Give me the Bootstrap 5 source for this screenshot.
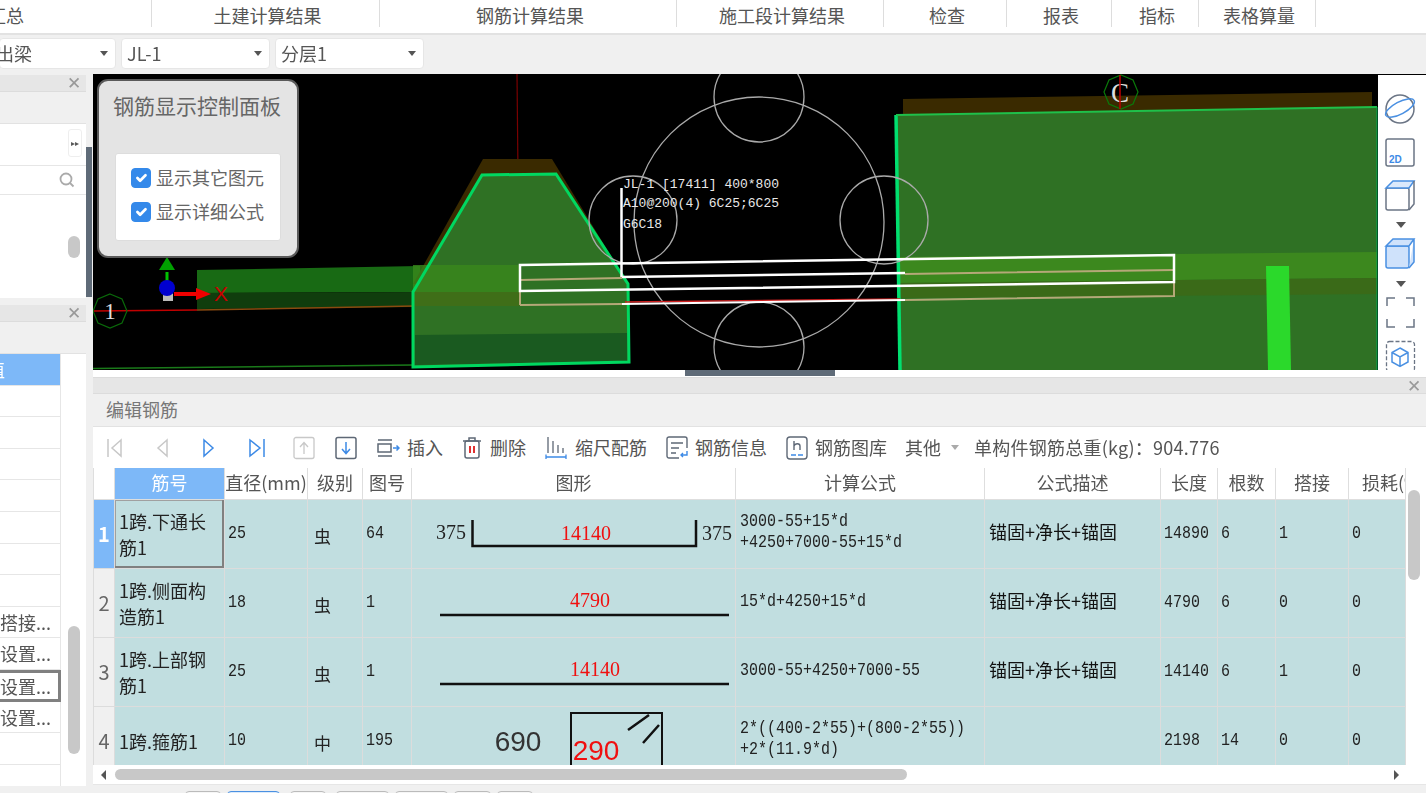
<!DOCTYPE html>
<html lang="zh-CN">
<head><meta charset="UTF-8"><meta name="viewport" content="width=device-width, initial-scale=1">
<title>编辑钢筋</title>
<link href="https://cdn.jsdelivr.net/npm/bootstrap@5.3.0/dist/css/bootstrap.min.css" rel="stylesheet">
<style>
html,body{height:793px;overflow:hidden}
body{background:#f0f0f0;color:#555;font-family:"Noto Sans CJK SC","Liberation Sans",sans-serif;font-size:18px;line-height:1.2;filter:blur(.35px)}
.top-tabs{height:35px;background:#fff;border-bottom:2px solid #e2e2e2;overflow:hidden}
.tab-cell{height:27px;border-right:1px solid #ddd;flex:none;line-height:31px;text-align:center;padding-left:4px}
.tab-first{width:152px;text-align:left;padding-left:0;text-indent:-12px}
.tool-strip{height:39px;padding:3px 0 0 0;overflow:hidden}
.pick{height:31px;background:#fff;border-radius:4px;border:1px solid #e6e6e6;padding:0 7px 0 5px;margin-right:5px;line-height:29px;flex:none}
.pick-a{width:117px;margin-left:-1px}
.pick-a .pick-text{margin-left:-9px}
.pick-b{width:149px}
.caret-down{width:0;height:0;border-left:4px solid transparent;border-right:4px solid transparent;border-top:5px solid #555;display:inline-block;align-self:center}
.main-area{height:719px}
.side-col{width:86px;flex:none}
.side-panel{background:#fff;position:relative;overflow:hidden}
.side-one{height:223px;margin-top:1px}
.side-two{height:481px;margin-top:7px}
.panel-head{height:17px;background:#e6e6e6;border-bottom:1px solid #dcdcdc;position:relative}
.panel-x{position:absolute;right:5px;top:-1px;font-size:17px;line-height:20px;color:#999;font-family:"Liberation Sans",sans-serif}
.panel-sub{height:32px;background:#f0f0f0;border-bottom:1px solid #e2e2e2}
.side-row{height:42px;border-bottom:1px solid #e6e6e6;position:relative}
.side-find{height:29px;border-bottom:1px solid #e6e6e6;position:relative}
.more-chip{position:absolute;left:68px;top:5px;width:14px;height:28px;background:#fff;border:1px solid #eee;border-radius:3px;font-size:8px;line-height:26px;text-align:center;color:#555}
.side-thumb{position:absolute;left:68px;width:12px;background:#c8c8c8;border-radius:6px}
.thumb-one{top:161px;height:22px}
.thumb-two{top:321px;height:128px}
.split-col{width:7px;flex:none}
.split-bar{width:6px;height:150px;margin-top:73px;background:#5f6b78}
.work-col{width:1333px;flex:none}
.view-box{height:296px;background:#000;position:relative}
.view-box svg{display:block}
.view-rail{position:absolute;right:0;top:1px;width:48px;height:295px;background:#fff}
.ctrl-panel{position:absolute;left:4px;top:5px;width:202px;height:179px;background:#e4e4e4;border:2px solid #5a5a5a;border-radius:11px;padding:0 16px}
.ctrl-title{font-size:21px;line-height:26px;color:#666;text-align:center;margin:11px -2px 35px -4px;white-space:nowrap}
.ctrl-box{height:88px;background:#fff;border:1px solid #ddd;border-radius:3px;padding:13px 0 0 15px}
.ctrl-box .form-check{min-height:0;padding:0;margin:0 0 12px;display:flex;align-items:center;gap:5px;height:22px}
.ctrl-box .form-check-input{float:none;margin:0;width:20px;height:20px;background-color:#3489ea;border-color:#3489ea;border-radius:4px}
.ctrl-box .form-check-label{opacity:1;color:#666;white-space:nowrap}
.drag-strip{height:7px;background:#fff}
.drag-handle{width:150px;height:6px;margin-left:592px;background:#5f6b78}
.edit-head{height:17px;background:#e6e6e6;border-top:1px solid #dcdcdc;border-bottom:1px solid #dcdcdc;position:relative}
.edit-title{height:33px;background:#f0f0f0;border-bottom:1px solid #e2e2e2;padding-left:13px;line-height:30px;color:#777}
.edit-tools{height:41px;background:#fff;padding-left:12px;white-space:nowrap}
.edit-tools svg{flex:none}
.nav-ico{margin-right:28px}
.tool-item{margin-right:19px;gap:8px}
.tool-first{gap:7px}
.weight-text{letter-spacing:.25px}
.grid-wrap{height:297px;background:#fff;overflow:hidden;position:relative}
.rebar-grid{width:1312px;table-layout:fixed;border-collapse:collapse;margin:0}
.rebar-grid.table>thead>tr>th{height:31px;padding:0;background:#fff;color:#555;font-weight:400;text-align:center;vertical-align:middle;border:1px solid #dedede;white-space:nowrap;overflow:hidden;border-top:0}
.rebar-grid.table>thead>tr>th.head-on{background:#7db8f8;color:#fff}
.rebar-grid.table>thead>tr>th.head-clip{text-align:left;padding-left:13px}
.rebar-grid.table>tbody>tr>td{height:69px;padding:0 4px;background:#c1dee0;color:#222;border:1px solid #dcdcdc;vertical-align:middle;font-size:18px;line-height:26px;overflow:hidden}
.rebar-grid.table>tbody>tr>td.row-no{padding:0;background:#f0f0f0;color:#666;text-align:center;font-size:20px}
.rebar-grid.table>tbody>tr>td.row-on{background:#7db8f8;color:#fff;font-weight:700}
.rebar-grid.table>tbody>tr>td.cell-on{box-shadow:inset -2px -2px 0 #808080,inset 1px 1px 0 #a0a0a0}
.rebar-grid.table>tbody>tr>td.draw-cell{padding:0}
.rebar-grid.table>tbody>tr>td.lvl-cell{padding-left:6px;padding-top:4px;font-size:17px}
.rebar-grid.table>tbody>tr>td.num-cell{padding:0 3px 2px}
.rebar-grid.table>tbody>tr>td.calc-cell{line-height:21px;padding-bottom:3px}
.rebar-grid.table>tbody>tr>td.desc-cell{color:#111;padding-bottom:6px}
.narrow-text{display:block;width:120%;transform:scaleX(.8333);transform-origin:0 50%;font-family:"Liberation Mono",monospace;white-space:nowrap}
.rebar-grid svg{display:block}
.side-bar-v{position:absolute;right:6px;top:22px;width:12px;height:90px;background:#c8c8c8;border-radius:6px}
.scroll-h{height:20px;background:#fff;padding:0 27px 0 8px;border-bottom:1px solid #e6e6e6}
.scroll-thumb{width:792px;height:11px;background:#c8c8c8;border-radius:6px;margin-left:9px}
.arrow-l{width:0;height:0;border-top:5px solid transparent;border-bottom:5px solid transparent;border-right:5px solid #555}
.arrow-r{width:0;height:0;border-top:5px solid transparent;border-bottom:5px solid transparent;border-left:5px solid #555;margin-left:auto}
.foot-tabs{height:8px;padding:6px 0 0 92px;gap:6px;overflow:hidden}
.foot-tab{height:6px;background:#f6f6f6;border:1px solid #bbb;border-radius:4px 4px 0 0;flex:none}
.foot-on{border-color:#4a90e2;background:#dcebfb}
.list-group-item.side-item{height:31.6px;padding:0 16px 0 0;text-align:right;white-space:nowrap;overflow:hidden;line-height:30px;color:#555;border-color:#e6e6e6;border-width:0 1px 1px 0;background:#fff;border-radius:0;width:61px}
.list-group-item.side-item.active{background:#7db8f8;color:#fff;padding:0;text-align:left;text-indent:-13px;margin:0}
.list-group-item.side-item.item-sel{border:3px solid #808080;border-left:0;line-height:26px;padding-right:14px}
</style>
</head><body>
<div class="top-tabs d-flex">
  <div class="tab-cell tab-first">汇总</div>
  <div class="tab-cell" style="width:228px">土建计算结果</div>
  <div class="tab-cell" style="width:297px">钢筋计算结果</div>
  <div class="tab-cell" style="width:207px">施工段计算结果</div>
  <div class="tab-cell" style="width:123px">检查</div>
  <div class="tab-cell" style="width:105px">报表</div>
  <div class="tab-cell" style="width:87px">指标</div>
  <div class="tab-cell" style="width:117px">表格算量</div>
</div>
<div class="tool-strip d-flex">
  <div class="pick pick-a d-flex justify-content-between"><span class="pick-text">出梁</span><span class="caret-down"></span></div>
  <div class="pick pick-b d-flex justify-content-between"><span>JL-1</span><span class="caret-down"></span></div>
  <div class="pick pick-b d-flex justify-content-between"><span>分层1</span><span class="caret-down"></span></div>
</div>
<div class="main-area d-flex">
  <div class="side-col">
    <div class="side-panel side-one">
      <div class="panel-head"><span class="panel-x">✕</span></div>
      <div class="panel-sub"></div>
      <div class="side-row"><span class="more-chip">▸▸</span></div>
      <div class="side-find">
        <svg class="position-absolute" style="left:59px;top:6px" width="16" height="16" viewBox="0 0 16 16" fill="none" stroke="#aaa" stroke-width="1.8"><circle cx="7" cy="7" r="5.5"/><path d="M11 11l3.5 3.5"/></svg>
      </div>
      <div class="side-thumb thumb-one"></div>
    </div>
    <div class="side-panel side-two">
      <div class="panel-head"><span class="panel-x">✕</span></div>
      <div class="panel-sub"></div>
      <div class="list-group list-group-flush">
        <div class="list-group-item side-item active">值</div>
        <div class="list-group-item side-item">&nbsp;</div>
        <div class="list-group-item side-item">&nbsp;</div>
        <div class="list-group-item side-item">&nbsp;</div>
        <div class="list-group-item side-item">&nbsp;</div>
        <div class="list-group-item side-item">&nbsp;</div>
        <div class="list-group-item side-item">&nbsp;</div>
        <div class="list-group-item side-item">&nbsp;</div>
        <div class="list-group-item side-item">搭接...</div>
        <div class="list-group-item side-item">设置...</div>
        <div class="list-group-item side-item item-sel">设置...</div>
        <div class="list-group-item side-item">设置...</div>
        <div class="list-group-item side-item">&nbsp;</div>
        <div class="list-group-item side-item">&nbsp;</div>
      </div>
      <div class="side-thumb thumb-two"></div>
    </div>
  </div>
  <div class="split-col"><div class="split-bar"></div></div>
  <div class="work-col">
    <div class="view-box">
      <svg width="1285" height="296" viewBox="93 74 1285 296" fill="none">
        <path d="M517 74L518 175" stroke="#7a0000" stroke-width="1.2"/>
        <path d="M197 270L420 266V292L197 293Z" fill="#186a14"/>
        <path d="M197 293L420 292V307L197 309Z" fill="#103d0d"/>
        <path d="M93 311L197 310" stroke="#c00000" stroke-width="1.5"/>
        <path d="M197 310L415 306" stroke="#8a4a10" stroke-width="1.5"/>
        <path d="M93 368.500L413 365" stroke="#1a7a1a" stroke-width="1.5"/>
        <polygon points="110,294 122,299 127,311 122,323 110,328 98,323 93,311 98,299" stroke="#0a6a0a" stroke-width="1.2"/>
        <text x="110" y="319" fill="#ddd" font-family="Liberation Serif" font-size="23" text-anchor="middle">1</text>
        <path d="M167 272V282" stroke="#00c000" stroke-width="3"/>
        <path d="M159 270L167 257L175 270Z" fill="#00a000"/>
        <path d="M174 292H196V288L211 294L196 300V296H174Z" fill="#f00000"/>
        <rect x="163" y="292" width="10" height="9" fill="#bbb"/>
        <circle cx="167" cy="288" r="8" fill="#0000d0"/>
        <text x="221" y="301" fill="#c80000" font-family="Liberation Sans" font-size="21" text-anchor="middle">X</text>

        <path d="M483 159H552L628 284H413Z" fill="#3a2a00"/>
        <polygon points="413,292 482,175 556,174 628,284 629,362 413,367" fill="#2f7124"/>
        <path d="M413 265H520V292H413Z" fill="#3a881c" opacity=".8"/>
        <path d="M413 292H520V306H413Z" fill="#3f6e18"/>
        <path d="M415 335L627 333V361L415 365Z" fill="#1a5a20"/>
        <polygon points="413,292 482,175 556,174 628,284 629,362 413,367" stroke="#00d860" stroke-width="3"/>

        <path d="M903 99L1372 92V108L903 115Z" fill="#3a2a00"/>
        <path d="M896 115L1377 107V370H900Z" fill="#2f7124"/>
        <path d="M900 257L1377 252V278L900 283Z" fill="#3c881e"/>
        <path d="M900 283L1377 278V294L900 298Z" fill="#3a6a18"/>
        <path d="M896 115L900 370" stroke="#00e070" stroke-width="3.500"/>
        <path d="M896 115L1377 107" stroke="#1fc04a" stroke-width="2"/>
        <path d="M1377 107V370" stroke="#00b050" stroke-width="1"/>
        <path d="M1266 266H1289L1291 370H1268Z" fill="#2bd92b"/>

        <g stroke="#aaa" stroke-width="1.300">
          <circle cx="759" cy="222" r="125"/>
          <circle cx="759" cy="97" r="45"/>
          <circle cx="633" cy="220" r="44"/>
          <circle cx="884" cy="220" r="44"/>
          <circle cx="759" cy="347" r="45"/>
        </g>
        <polygon points="1121,75 1133,80 1138,92 1133,104 1121,109 1109,104 1104,92 1109,80" stroke="#0a7a0a" stroke-width="1.2"/>
        <text x="1120" y="102" fill="#ddd" font-family="Liberation Serif" font-size="27" text-anchor="middle">C</text>
        <path d="M1120 75V109" stroke="#c00000" stroke-width="1.500"/>

        <g font-family="Liberation Mono" font-size="13" fill="#e8e8e8">
          <text x="623" y="188">JL-1 [17411] 400*800</text>
          <text x="623" y="207">A10@200(4) 6C25;6C25</text>
          <text x="623" y="228">G6C18</text>
        </g>
        <path d="M621.500 188V277" stroke="#fff" stroke-width="2.500"/>
        <path d="M520 305L622 304M905 300L1174 296V282M520 291V305" stroke="#b5a878" stroke-width="2"/>
        <path d="M520 280L622 278M905 274L1174 270" stroke="#b5a878" stroke-width="2"/>
        <path d="M622 277L905 273" stroke="#fff" stroke-width="2.500"/>
        <path d="M625 302L900 299" stroke="#d02020" stroke-width="1.500"/>
        <path d="M622 304L905 300" stroke="#fff" stroke-width="2"/>
        <path d="M520 265L1174 255V282L520 291Z" stroke="#fff" stroke-width="2.500"/>
      </svg>
      <div class="view-rail">
        <svg width="48" height="295" viewBox="1378 75 48 295" fill="none">
          <circle cx="1400" cy="109" r="14" stroke="#6b7585" stroke-width="1.500"/>
          <ellipse cx="1400" cy="108" rx="16" ry="6" transform="rotate(-28 1400 108)" stroke="#4a90e2" stroke-width="1.500"/>
          <rect x="1386" y="139" width="28" height="27" rx="2" stroke="#6b7585" stroke-width="1.500"/>
          <text x="1389" y="163" fill="#3d8ae6" font-family="Liberation Sans" font-size="10" font-weight="700">2D</text>
          <rect x="1386" y="188" width="23" height="22" rx="2" stroke="#6b7585" stroke-width="1.500"/>
          <path d="M1386 188L1393 181H1414L1409 188Z" fill="#dbe9fb" stroke="#4a90e2" stroke-width="1.500"/>
          <path d="M1414 181V204L1409 210" stroke="#6b7585" stroke-width="1.500"/>
          <path d="M1396 222H1406L1401 228Z" fill="#555"/>
          <rect x="1386" y="246" width="23" height="22" rx="2" fill="#cfe2fb" stroke="#4a90e2" stroke-width="1.500"/>
          <path d="M1386 246L1393 239H1414L1409 246ZM1414 239V262L1409 268" fill="#cfe2fb" stroke="#4a90e2" stroke-width="1.500"/>
          <path d="M1396 281H1406L1401 287Z" fill="#555"/>
          <path d="M1387 306V298H1395M1406 298H1414V306M1387 319V327H1395M1406 327H1414V319" stroke="#6b7585" stroke-width="1.500"/>
          <rect x="1386.500" y="341.500" width="28" height="30" rx="3" stroke="#6b7585" stroke-width="1.300" stroke-dasharray="4 2"/>
          <path d="M1400 348L1408 352.500V362L1400 366.500L1392 362V352.500ZM1392 352.500L1400 357L1408 352.500M1400 357V366" stroke="#4a90e2" stroke-width="1.500"/>
        </svg>
      </div>
      <div class="card ctrl-panel">
        <div class="ctrl-title">钢筋显示控制面板</div>
        <div class="ctrl-box">
          <div class="form-check"><input class="form-check-input" type="checkbox" id="showOther" checked><label class="form-check-label" for="showOther">显示其它图元</label></div>
          <div class="form-check"><input class="form-check-input" type="checkbox" id="showFormula" checked><label class="form-check-label" for="showFormula">显示详细公式</label></div>
        </div>
      </div>
    </div>
    <div class="drag-strip"><div class="drag-handle"></div></div>
    <div class="edit-head"><span class="panel-x">✕</span></div>
    <div class="edit-title">编辑钢筋</div>
    <div class="edit-tools d-flex align-items-center">
      <svg class="nav-ico" width="20" height="22" viewBox="0 0 20 22" fill="none" stroke="#c8c8c8" stroke-width="1.500"><path d="M3 2V20M16 3L7 11L16 19Z"/></svg>
      <svg class="nav-ico" width="18" height="22" viewBox="0 0 18 22" fill="none" stroke="#c8c8c8" stroke-width="1.500"><path d="M14 3L5 11L14 19Z"/></svg>
      <svg class="nav-ico" width="20" height="22" viewBox="0 0 20 22" fill="none" stroke="#3d8ae6" stroke-width="1.500"><path d="M5 3L14 11L5 19Z"/></svg>
      <svg style="margin-right:26px" width="20" height="22" viewBox="0 0 20 22" fill="none" stroke="#3d8ae6" stroke-width="1.500"><path d="M3 3L13 11L3 19ZM17 2V20"/></svg>
      <svg style="margin-right:20px" width="22" height="24" viewBox="0 0 22 24" fill="none" stroke="#c8c8c8" stroke-width="1.300"><rect x="1" y="1.500" width="20" height="21" rx="2"/><path d="M11 18V7M7 11L11 6.500L15 11"/></svg>
      <svg style="margin-right:19px" width="22" height="24" viewBox="0 0 22 24" fill="none" stroke-width="1.500"><rect x="1" y="1.500" width="20" height="21" rx="2" stroke="#5e6876"/><path d="M11 6V17M7 13L11 17.500L15 13" stroke="#3d8ae6"/></svg>
      <div class="d-flex align-items-center tool-item tool-first">
        <svg width="24" height="20" viewBox="0 0 24 20" fill="none" stroke-width="1.500"><path d="M2 2H16M2 18H16" stroke="#5e6876"/><rect x="2" y="6" width="13" height="8" stroke="#5e6876"/><path d="M17 10H23M20.500 7.500L23 10L20.500 12.500" stroke="#3d8ae6"/></svg>
        <span>插入</span>
      </div>
      <div class="d-flex align-items-center tool-item">
        <svg width="20" height="24" viewBox="0 0 20 24" fill="none" stroke-width="1.500"><path d="M1 5H19M7 5V2H13V5" stroke="#5e6876"/><rect x="3" y="5" width="14" height="17" rx="2" stroke="#5e6876"/><path d="M8 10V17M12 10V17" stroke="#e03030" stroke-width="2"/></svg>
        <span>删除</span>
      </div>
      <div class="d-flex align-items-center tool-item">
        <svg width="22" height="24" viewBox="0 0 22 24" fill="none" stroke-width="1.300"><path d="M3 1V17M8 5V17M13 9V17M18 12V17" stroke="#5e6876"/><path d="M1 21H21M1 18.500V23M21 18.500V23" stroke="#3d8ae6"/></svg>
        <span>缩尺配筋</span>
      </div>
      <div class="d-flex align-items-center tool-item">
        <svg width="23" height="24" viewBox="0 0 23 24" fill="none" stroke-width="1.400"><path d="M13 22H3A2 2 0 0 1 1 20V3A2 2 0 0 1 3 1H19A2 2 0 0 1 21 3V12" stroke="#5e6876"/><path d="M5 7H17M5 12H13M5 17H10" stroke="#5e6876"/><path d="M21 15V19H15M17 17L15 19L17 21" stroke="#3d8ae6"/></svg>
        <span style="margin-left:-2px">钢筋信息</span>
      </div>
      <div class="d-flex align-items-center tool-item" style="margin-right:18px">
        <svg width="22" height="24" viewBox="0 0 22 24" fill="none" stroke-width="1.400"><rect x="1" y="1" width="20" height="22" rx="3" stroke="#5e6876"/><path d="M8 5V14M8 10C9 7 14 7 14 10V14" stroke="#5e6876"/><path d="M5 19H10M12 19H17" stroke="#3d8ae6"/></svg>
        <span style="margin-left:-1px">钢筋图库</span>
      </div>
      <div class="d-flex align-items-center" style="gap:10px;margin-right:15px"><span>其他</span><span class="caret-down" style="border-top-color:#aaa"></span></div>
      <span class="weight-text">单构件钢筋总重(kg)：904.776</span>
    </div>
    <div class="grid-wrap">
      <table class="table rebar-grid">
        <colgroup><col style="width:21px"><col style="width:110px"><col style="width:83px"><col style="width:55px"><col style="width:49px"><col style="width:324px"><col style="width:249px"><col style="width:176px"><col style="width:57px"><col style="width:58px"><col style="width:73px"><col style="width:57px"></colgroup>
        <thead>
          <tr><th></th><th class="head-on">筋号</th><th>直径(mm)</th><th>级别</th><th>图号</th><th>图形</th><th>计算公式</th><th>公式描述</th><th>长度</th><th>根数</th><th>搭接</th><th class="head-clip">损耗(%)</th></tr>
        </thead>
        <tbody>
          <tr>
            <td class="row-no row-on">1</td><td class="cell-on">1跨.下通长筋1</td><td class="num-cell"><span class="narrow-text">25</span></td><td class="lvl-cell">虫</td><td class="num-cell"><span class="narrow-text">64</span></td>
            <td class="draw-cell"><svg width="324" height="68" viewBox="411 500 324 68" fill="none">
              <text x="450" y="539" fill="#222" font-family="Liberation Serif" font-size="20" text-anchor="middle">375</text>
              <path d="M471.500 520V546H695V520" stroke="#111" stroke-width="2.500"/>
              <text x="585" y="540" fill="#f01010" font-family="Liberation Serif" font-size="20" text-anchor="middle">14140</text>
              <text x="716" y="540" fill="#222" font-family="Liberation Serif" font-size="20" text-anchor="middle">375</text>
            </svg></td>
            <td class="calc-cell"><span class="narrow-text">3000-55+15*d<br>+4250+7000-55+15*d</span></td><td class="desc-cell">锚固+净长+锚固</td><td class="num-cell"><span class="narrow-text">14890</span></td><td class="num-cell"><span class="narrow-text">6</span></td><td class="num-cell"><span class="narrow-text">1</span></td><td class="num-cell"><span class="narrow-text">0</span></td>
          </tr>
          <tr>
            <td class="row-no">2</td><td>1跨.侧面构造筋1</td><td class="num-cell"><span class="narrow-text">18</span></td><td class="lvl-cell">虫</td><td class="num-cell"><span class="narrow-text">1</span></td>
            <td class="draw-cell"><svg width="324" height="68" viewBox="411 569 324 68" fill="none">
              <text x="589" y="607" fill="#f01010" font-family="Liberation Serif" font-size="20" text-anchor="middle">4790</text>
              <path d="M439 615H728" stroke="#111" stroke-width="2.500"/>
            </svg></td>
            <td class="calc-cell"><span class="narrow-text">15*d+4250+15*d</span></td><td class="desc-cell">锚固+净长+锚固</td><td class="num-cell"><span class="narrow-text">4790</span></td><td class="num-cell"><span class="narrow-text">6</span></td><td class="num-cell"><span class="narrow-text">0</span></td><td class="num-cell"><span class="narrow-text">0</span></td>
          </tr>
          <tr>
            <td class="row-no">3</td><td>1跨.上部钢筋1</td><td class="num-cell"><span class="narrow-text">25</span></td><td class="lvl-cell">虫</td><td class="num-cell"><span class="narrow-text">1</span></td>
            <td class="draw-cell"><svg width="324" height="68" viewBox="411 638 324 68" fill="none">
              <text x="594" y="676" fill="#f01010" font-family="Liberation Serif" font-size="20" text-anchor="middle">14140</text>
              <path d="M439 684H728" stroke="#111" stroke-width="2.500"/>
            </svg></td>
            <td class="calc-cell"><span class="narrow-text">3000-55+4250+7000-55</span></td><td class="desc-cell">锚固+净长+锚固</td><td class="num-cell"><span class="narrow-text">14140</span></td><td class="num-cell"><span class="narrow-text">6</span></td><td class="num-cell"><span class="narrow-text">1</span></td><td class="num-cell"><span class="narrow-text">0</span></td>
          </tr>
          <tr>
            <td class="row-no">4</td><td>1跨.箍筋1</td><td class="num-cell"><span class="narrow-text">10</span></td><td class="lvl-cell">中</td><td class="num-cell"><span class="narrow-text">195</span></td>
            <td class="draw-cell"><svg width="324" height="68" viewBox="411 707 324 68" fill="none">
              <text x="517" y="751" fill="#333" font-family="Liberation Sans" font-size="28" text-anchor="middle">690</text>
              <path d="M570 775V713H661V775" stroke="#111" stroke-width="2"/>
              <path d="M648 715L627 730M658 725L642 743" stroke="#111" stroke-width="2.500"/>
              <text x="595" y="760" fill="#f01010" font-family="Liberation Sans" font-size="28" text-anchor="middle">290</text>
            </svg></td>
            <td class="calc-cell"><span class="narrow-text">2*((400-2*55)+(800-2*55))<br>+2*(11.9*d)</span></td><td class="desc-cell"></td><td class="num-cell"><span class="narrow-text">2198</span></td><td class="num-cell"><span class="narrow-text">14</span></td><td class="num-cell"><span class="narrow-text">0</span></td><td class="num-cell"><span class="narrow-text">0</span></td>
          </tr>
        </tbody>
      </table>
      <div class="side-bar-v"></div>
    </div>
    <div class="scroll-h d-flex align-items-center"><span class="arrow-l"></span><span class="scroll-thumb"></span><span class="arrow-r"></span></div>
    <div class="foot-tabs d-flex">
      <span class="foot-tab" style="width:36px"></span><span class="foot-tab foot-on" style="width:53px"></span><span class="foot-tab ms-1" style="width:36px"></span><span class="foot-tab ms-1" style="width:53px"></span><span class="foot-tab" style="width:53px"></span><span class="foot-tab" style="width:37px"></span><span class="foot-tab" style="width:36px"></span>
    </div>
  </div>
</div>
<script src="https://cdn.jsdelivr.net/npm/bootstrap@5.3.0/dist/js/bootstrap.bundle.min.js"></script>
</body></html>
